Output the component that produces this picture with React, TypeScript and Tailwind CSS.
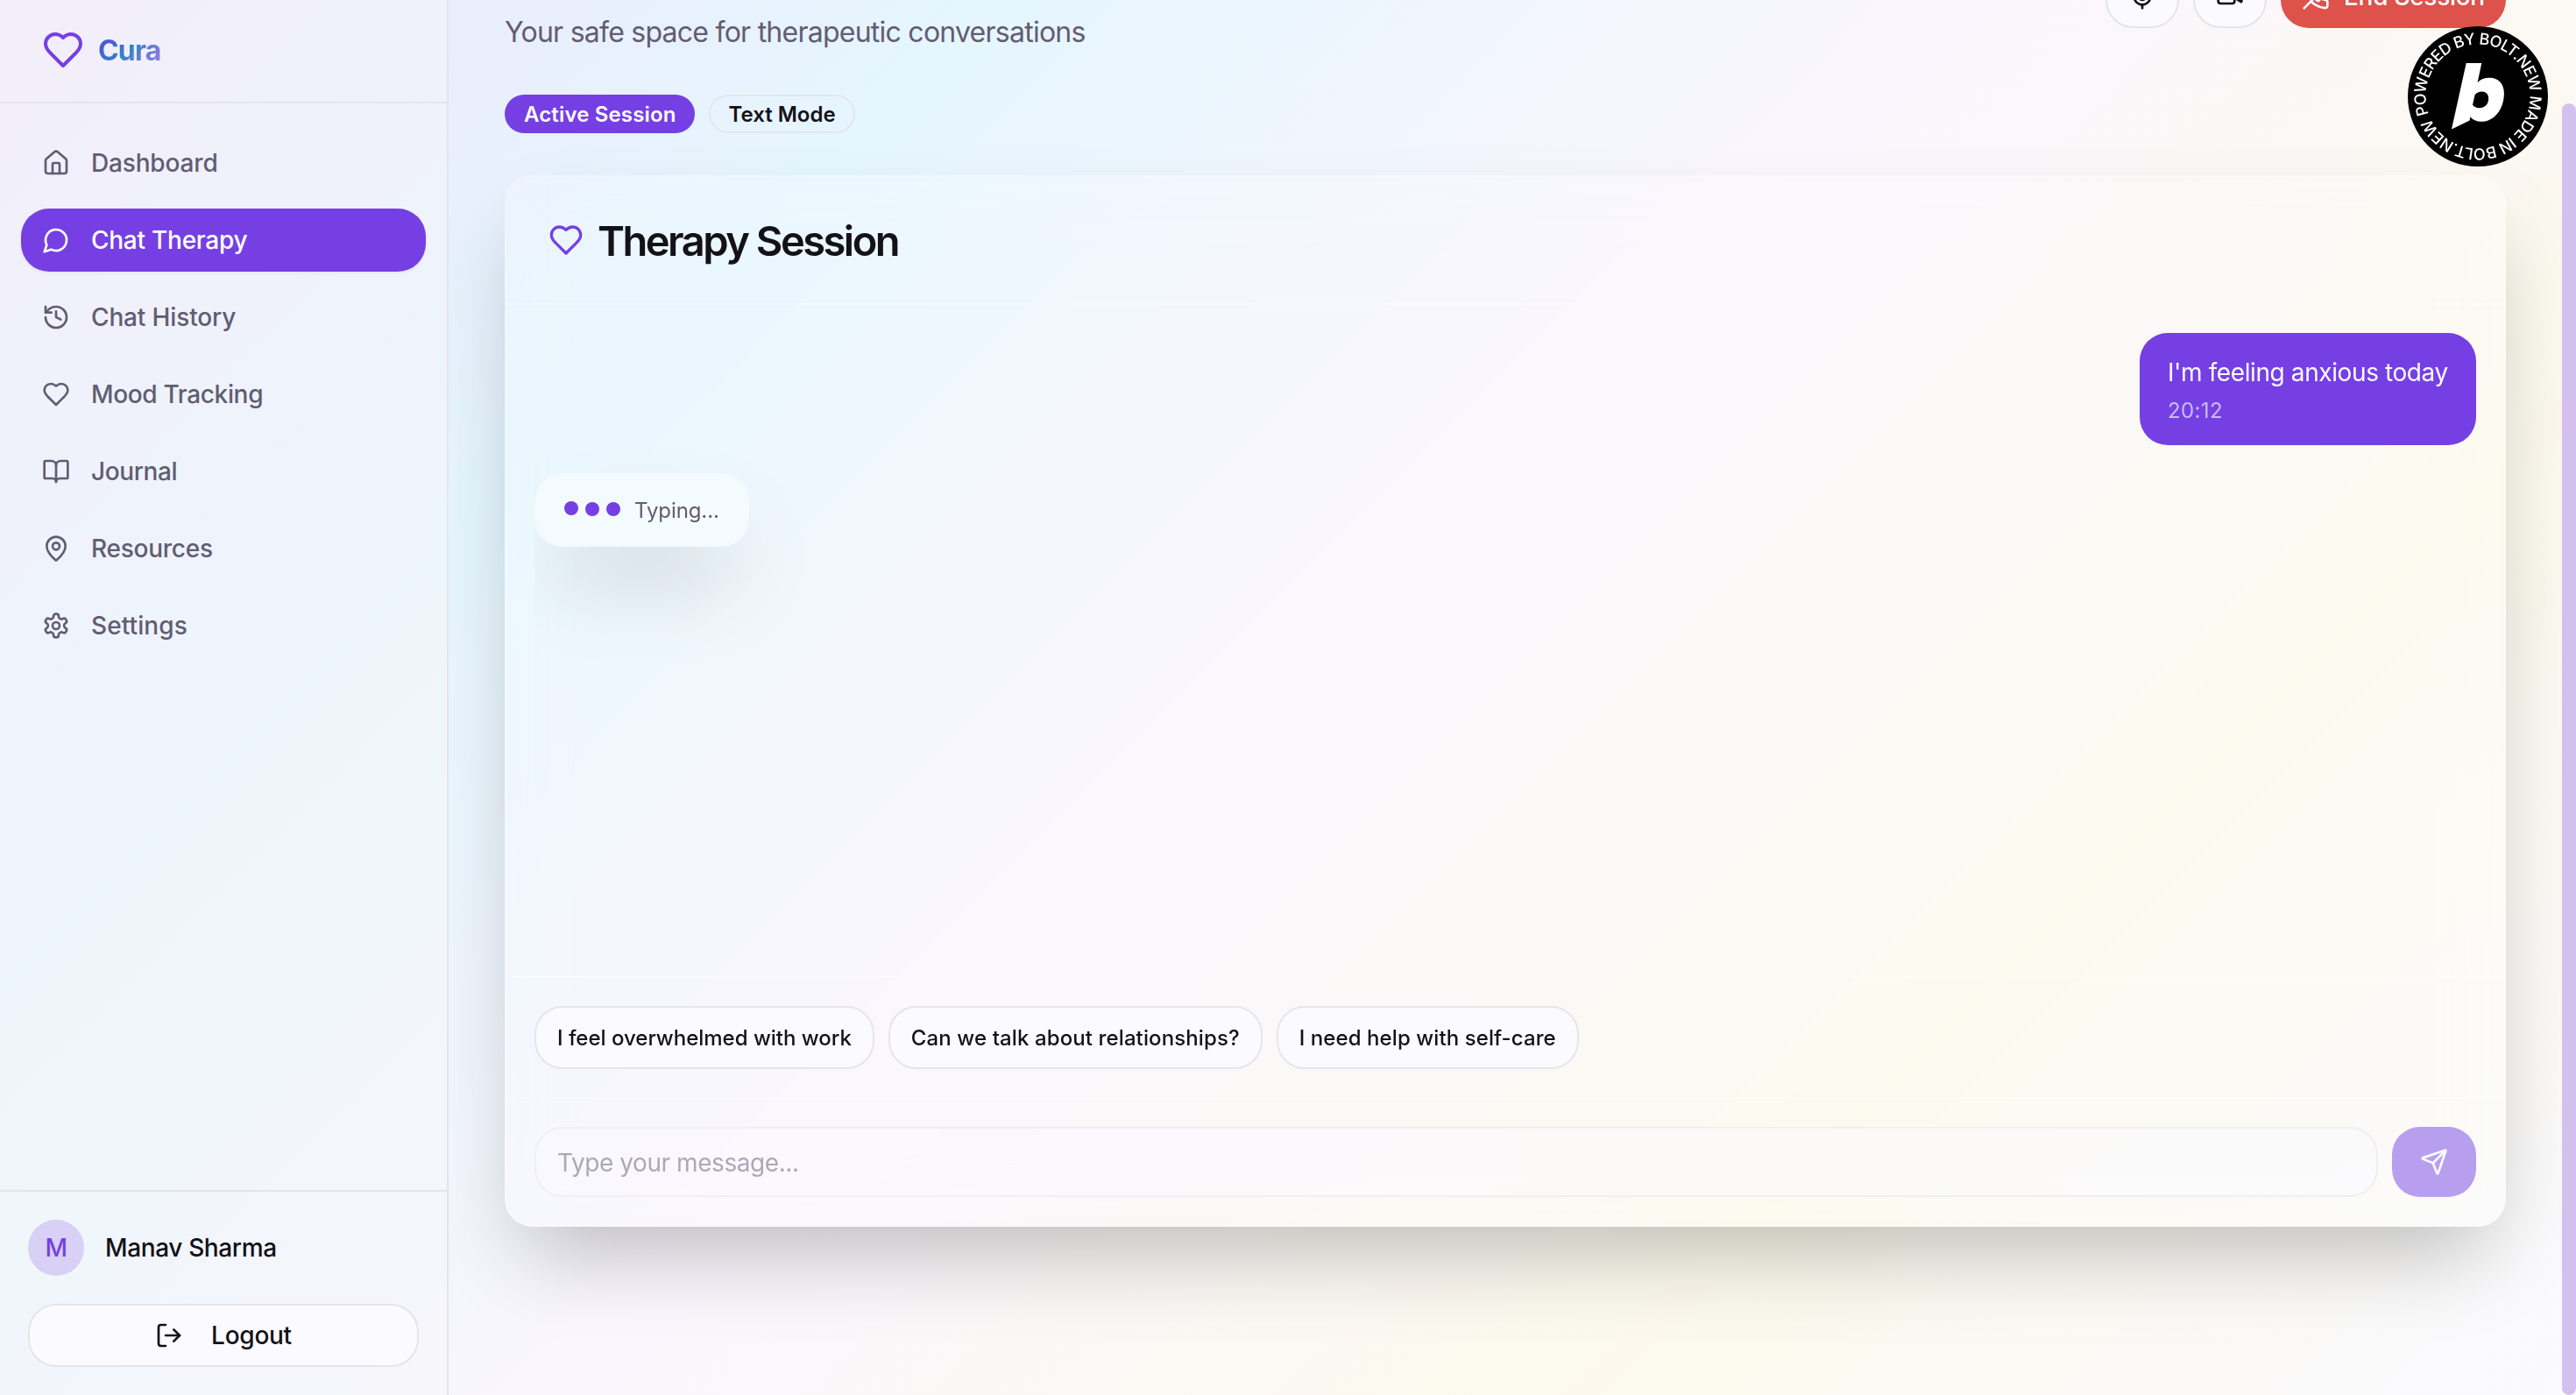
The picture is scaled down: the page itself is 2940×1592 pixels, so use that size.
import React from "react";

type IconProps = { className?: string; children: React.ReactNode };

function Icon({ className = "size-8", children }: IconProps) {
  return (
    <svg
      viewBox="0 0 24 24"
      fill="none"
      stroke="currentColor"
      strokeWidth={2}
      strokeLinecap="round"
      strokeLinejoin="round"
      className={`shrink-0 ${className}`}
    >
      {children}
    </svg>
  );
}

const heart = (
  <path d="M19 14c1.49-1.46 3-3.21 3-5.5A5.5 5.5 0 0 0 16.5 3c-1.76 0-3 .5-4.5 2-1.5-1.5-2.74-2-4.5-2A5.5 5.5 0 0 0 2 8.5c0 2.3 1.5 4.05 3 5.5l7 7Z" />
);

const navItems: { label: string; tracking: string; icon: React.ReactNode; active?: boolean }[] = [
  {
    label: "Dashboard",
    tracking: "tracking-[-0.006em]",
    icon: (
      <>
        <path d="M15 21v-8a1 1 0 0 0-1-1h-4a1 1 0 0 0-1 1v8" />
        <path d="M3 10a2 2 0 0 1 .709-1.528l7-5.999a2 2 0 0 1 2.582 0l7 5.999A2 2 0 0 1 21 10v9a2 2 0 0 1-2 2H5a2 2 0 0 1-2-2z" />
      </>
    ),
  },
  {
    label: "Chat Therapy",
    tracking: "tracking-[-0.009em]",
    icon: <path d="M7.9 20A9 9 0 1 0 4 16.1L2 22Z" />,
    active: true,
  },
  {
    label: "Chat History",
    tracking: "tracking-[-0.005em]",
    icon: (
      <>
        <path d="M3 12a9 9 0 1 0 9-9 9.75 9.75 0 0 0-6.74 2.74L3 8" />
        <path d="M3 3v5h5" />
        <path d="M12 7v5l4 2" />
      </>
    ),
  },
  { label: "Mood Tracking", tracking: "tracking-[-0.012em]", icon: heart },
  {
    label: "Journal",
    tracking: "tracking-[-0.0135em]",
    icon: (
      <>
        <path d="M12 7v14" />
        <path d="M3 18a1 1 0 0 1-1-1V4a1 1 0 0 1 1-1h5a4 4 0 0 1 4 4 4 4 0 0 1 4-4h5a1 1 0 0 1 1 1v13a1 1 0 0 1-1 1h-6a3 3 0 0 0-3 3 3 3 0 0 0-3-3z" />
      </>
    ),
  },
  {
    label: "Resources",
    tracking: "tracking-[-0.009em]",
    icon: (
      <>
        <path d="M20 10c0 4.993-5.539 10.193-7.399 11.799a1 1 0 0 1-1.202 0C9.539 20.193 4 14.993 4 10a8 8 0 0 1 16 0" />
        <circle cx="12" cy="10" r="3" />
      </>
    ),
  },
  {
    label: "Settings",
    tracking: "tracking-[0.003em]",
    icon: (
      <>
        <path d="M12.22 2h-.44a2 2 0 0 0-2 2v.18a2 2 0 0 1-1 1.73l-.43.25a2 2 0 0 1-2 0l-.15-.08a2 2 0 0 0-2.73.73l-.22.38a2 2 0 0 0 .73 2.73l.15.1a2 2 0 0 1 1 1.72v.51a2 2 0 0 1-1 1.74l-.15.09a2 2 0 0 0-.73 2.73l.22.38a2 2 0 0 0 2.73.73l.15-.08a2 2 0 0 1 2 0l.43.25a2 2 0 0 1 1 1.73V20a2 2 0 0 0 2 2h.44a2 2 0 0 0 2-2v-.18a2 2 0 0 1 1-1.73l.43-.25a2 2 0 0 1 2 0l.15.08a2 2 0 0 0 2.73-.73l.22-.39a2 2 0 0 0-.73-2.73l-.15-.08a2 2 0 0 1-1-1.74v-.5a2 2 0 0 1 1-1.74l.15-.09a2 2 0 0 0 .73-2.73l-.22-.38a2 2 0 0 0-2.73-.73l-.15.08a2 2 0 0 1-2 0l-.43-.25a2 2 0 0 1-1-1.73V4a2 2 0 0 0-2-2z" />
        <circle cx="12" cy="12" r="3" />
      </>
    ),
  },
];

function Sidebar() {
  return (
    <aside className="flex w-[512px] shrink-0 flex-col border-r-2 border-[#e5e5ea] bg-[rgba(246,245,249,0.5)]">
      <div className="flex h-[118px] items-center gap-4 border-b-2 border-[#e5e5ea] px-12 pb-0.5">
        <Icon className="size-12 text-[#753fe4]">{heart}</Icon>
        <span className="bg-[linear-gradient(135deg,#5a3fe2_0%,#3385c2_50%,#ae74f4_100%)] bg-clip-text pt-0.5 text-[32px] leading-[44px] font-bold tracking-[-0.025em] text-transparent">
          Cura
        </span>
      </div>
      <nav className="flex flex-1 flex-col gap-4 px-6 py-8">
        {navItems.map((item) => (
          <a
            key={item.label}
            className={
              item.active
                ? "flex h-[72px] items-center gap-6 rounded-[32px] bg-[#753fe4] px-6 text-white shadow-[0_2px_4px_rgba(0,0,0,0.05)]"
                : "flex h-[72px] items-center gap-6 rounded-[32px] px-6 text-[#625c72]"
            }
          >
            <Icon>{item.icon}</Icon>
            <span className={`text-[28px] font-medium ${item.tracking}`}>{item.label}</span>
          </a>
        ))}
      </nav>
      <div className="flex flex-col gap-8 border-t-2 border-[#e5e5ea] p-8">
        <div className="flex items-center gap-6">
          <div className="flex size-16 items-center justify-center rounded-full bg-[#d8d0f5] text-[28px] font-medium tracking-[-0.02em] text-[#753fe4]">
            M
          </div>
          <span className="text-[28px] font-medium tracking-[-0.013em] text-[#141118]">Manav Sharma</span>
        </div>
        <button className="flex h-[72px] items-center justify-center gap-8 rounded-[32px] border-2 border-[#e5e5ea] bg-[#fbfaff] text-[28px] font-medium tracking-[-0.0096em] text-[#141118]">
          <Icon>
            <path d="M9 21H5a2 2 0 0 1-2-2V5a2 2 0 0 1 2-2h4" />
            <path d="m16 17 5-5-5-5" />
            <path d="M21 12H9" />
          </Icon>
          Logout
        </button>
      </div>
    </aside>
  );
}

function PageHeader() {
  return (
    <header className="-mt-[69px] flex h-[130px] shrink-0 items-center justify-between">
      <div className="flex flex-col gap-4">
        <h1 className="w-fit bg-[linear-gradient(90deg,#753fe4_0%,#3385c2_50%,#bcd3f2_85%,#b9cdf2_100%)] bg-clip-text text-[60px] leading-[66px] font-bold tracking-[-0.02em] text-transparent">
          AI Chat Therapy
        </h1>
        <p className="text-[32px] leading-[44px] tracking-[-0.0235em] text-[#625c72]">
          Your safe space for therapeutic conversations
        </p>
      </div>
      <div className="flex gap-4">
        <button className="flex h-[72px] w-[84px] items-center justify-center rounded-[32px] border-2 border-[#e4e5ea] bg-[#fbfaff] text-[#141118]">
          <Icon>
            <path d="M12 2a3 3 0 0 0-3 3v7a3 3 0 0 0 6 0V5a3 3 0 0 0-3-3Z" />
            <path d="M19 10v2a7 7 0 0 1-14 0v-2" />
            <path d="M12 19v3" />
          </Icon>
        </button>
        <button className="flex h-[72px] w-[84px] items-center justify-center rounded-[32px] border-2 border-[#e4e5ea] bg-[#fbfaff] text-[#141118]">
          <Icon>
            <path d="m16 13 5.223 3.482a.5.5 0 0 0 .777-.416V7.87a.5.5 0 0 0-.752-.432L16 10.5" />
            <rect x="2" y="6" width="14" height="12" rx="2" />
          </Icon>
        </button>
        <button className="flex h-[72px] w-[257px] items-center gap-4 rounded-[32px] bg-[#dd524a] px-6 text-[28px] font-medium tracking-[-0.01em] whitespace-nowrap text-[#fbfaff]">
          <Icon>
            <path d="M10.68 13.31a16 16 0 0 0 3.41 2.6l1.27-1.27a2 2 0 0 1 2.11-.45 12.84 12.84 0 0 0 2.81.7 2 2 0 0 1 1.72 2v3a2 2 0 0 1-2.18 2 19.79 19.79 0 0 1-8.63-3.07 19.42 19.42 0 0 1-3.33-2.67m-2.67-3.34a19.79 19.79 0 0 1-3.07-8.63A2 2 0 0 1 4.11 2h3a2 2 0 0 1 2 1.72 12.84 12.84 0 0 0 .7 2.81 2 2 0 0 1-.45 2.11L8.09 9.91" />
            <path d="M22 2 2 22" />
          </Icon>
          End Session
        </button>
      </div>
    </header>
  );
}

const suggestions = [
  { text: "I feel overwhelmed with work", tracking: "tracking-[-0.0005em]" },
  { text: "Can we talk about relationships?", tracking: "tracking-[0.0045em]" },
  { text: "I need help with self-care", tracking: "tracking-[0.0035em]" },
];

function ChatCard() {
  return (
    <section className="mt-12 flex h-[1200px] shrink-0 flex-col rounded-[32px] border-2 border-white/30 bg-white/20 bg-clip-padding shadow-[0_50px_100px_-24px_rgba(0,0,0,0.25)] backdrop-blur-[32px]">
      <div className="flex h-[146px] items-center gap-4 border-b-2 border-white/30 px-12">
        <Icon className="size-10 text-[#753fe4]">{heart}</Icon>
        <h2 className="pt-0.5 text-[47px] leading-[48px] font-semibold tracking-[-0.053em] text-[#141118]">
          Therapy Session
        </h2>
      </div>
      <div className="flex flex-1 flex-col px-8">
        <div className="flex flex-1 flex-col gap-8 overflow-hidden pt-8">
          <div className="flex w-[384px] flex-col gap-2 self-end rounded-[32px] bg-[#753fe4] px-8 pt-[25px] pb-[23px] text-[#fbfaff]">
            <p className="text-[28px] leading-10 tracking-[-0.0143em] whitespace-nowrap">I'm feeling anxious today</p>
            <span className="text-2xl leading-8 tracking-[0.016em] text-[#fbfaff]/65">20:12</span>
          </div>
          <div className="flex h-[84px] w-[245px] items-center gap-4 rounded-[32px] border-2 border-white/30 bg-white/40 bg-clip-padding px-8 shadow-[0_50px_100px_-24px_rgba(0,0,0,0.25)]">
            <div className="flex gap-2 pb-0.5">
              <span className="-mt-px mb-px size-4 rounded-full bg-[#753fe4]" />
              <span className="size-4 rounded-full bg-[#753fe4]" />
              <span className="size-4 rounded-full bg-[#753fe4]" />
            </div>
            <span className="pt-px text-2xl tracking-[-0.0037em] text-[#625c72]">Typing...</span>
          </div>
        </div>
      </div>
      <div className="flex gap-4 border-t-2 border-white/30 p-8">
        {suggestions.map((s) => (
          <button
            key={s.text}
            className={`h-[72px] rounded-[32px] border-2 border-[#e4e6ec] bg-[#fbfaff] px-6 pt-0.5 text-2xl font-medium text-[#141118] ${s.tracking}`}
          >
            {s.text}
          </button>
        ))}
      </div>
      <div className="flex gap-4 border-t-2 border-white/30 p-8">
        <input
          placeholder="Type your message..."
          className="h-20 min-w-0 flex-1 rounded-[32px] border-2 border-[#ececf1]/80 bg-[#fbfaff]/50 px-6 pt-0.5 text-[28px] tracking-[-0.0153em] placeholder:text-[#aca8b6]"
        />
        <button className="flex h-20 w-24 items-center justify-center rounded-[32px] bg-[#b89eee] text-[#fbfaff]">
          <Icon>
            <path d="M14.536 21.686a.5.5 0 0 0 .937-.024l6.5-19a.496.496 0 0 0-.635-.635l-19 6.5a.5.5 0 0 0-.024.937l7.93 3.18a2 2 0 0 1 1.112 1.11z" />
            <path d="m21.854 2.147-10.94 10.939" />
          </Icon>
        </button>
      </div>
    </section>
  );
}

function BoltBadge() {
  return (
    <svg viewBox="0 0 160 160" className="absolute top-[30px] right-8 size-40">
      <circle cx="80" cy="80" r="80" fill="#000" />
      <defs>
        <path id="ring" d="M23.4 98.4A59.5 59.5 0 1 1 136.6 61.6A59.5 59.5 0 1 1 23.4 98.4" />
      </defs>
      <g transform="rotate(-2 80 80)">
        <text fill="#fff" className="font-[Inter] text-[18px] font-medium" textLength="369" lengthAdjust="spacing">
          <textPath href="#ring" textLength="369" lengthAdjust="spacing">
            POWERED BY BOLT.NEW MADE IN BOLT.NEW
          </textPath>
        </text>
      </g>
      <path
        fill="#fff"
        fillRule="evenodd"
        d="M66.7 42H84.3L79.6 64.2C83 60.4 87.6 58.7 93.5 58.7C103.3 58.7 109.9 65.6 109.9 76.4C109.9 94.6 98.6 108.7 84 108.7C78.4 108.7 74 106.8 71.4 103.2L70.6 107.6L50 117.4ZM74 89.8C75.6 92 78.5 93.2 81.6 93.2C87.8 93.2 92.2 88.6 92.2 82.4C92.2 77.6 89 74.6 84.6 74.6C81.4 74.6 78.6 75.9 76.6 78.2Z"
      />
    </svg>
  );
}

export default function App() {
  return (
    <div className="relative flex h-[1592px] w-[2940px] overflow-hidden bg-[linear-gradient(135deg,#efe6fb_0%,#e5f6fe_25%,#fbf6fd_50%,#fcf9ec_75%,#fafaff_100%)] font-[Inter,sans-serif]">
      <Sidebar />
      <main className="flex h-full flex-1 flex-col overflow-hidden px-16">
        <PageHeader />
        <div className="mt-[47px] flex shrink-0 gap-4">
          <span className="flex h-11 items-center rounded-full bg-[#753fe4] px-[22px] pt-px text-2xl font-semibold tracking-[0.006em] text-[#fbfaff]">
            Active Session
          </span>
          <span className="flex h-11 items-center rounded-full border-2 border-[#e5e5ea] px-5 pt-px text-2xl font-semibold text-[#141118]">
            Text Mode
          </span>
        </div>
        <ChatCard />
      </main>
      <div className="mt-[118px] w-4 shrink-0 rounded-full bg-[#d3c0ef]" />
      <BoltBadge />
    </div>
  );
}
